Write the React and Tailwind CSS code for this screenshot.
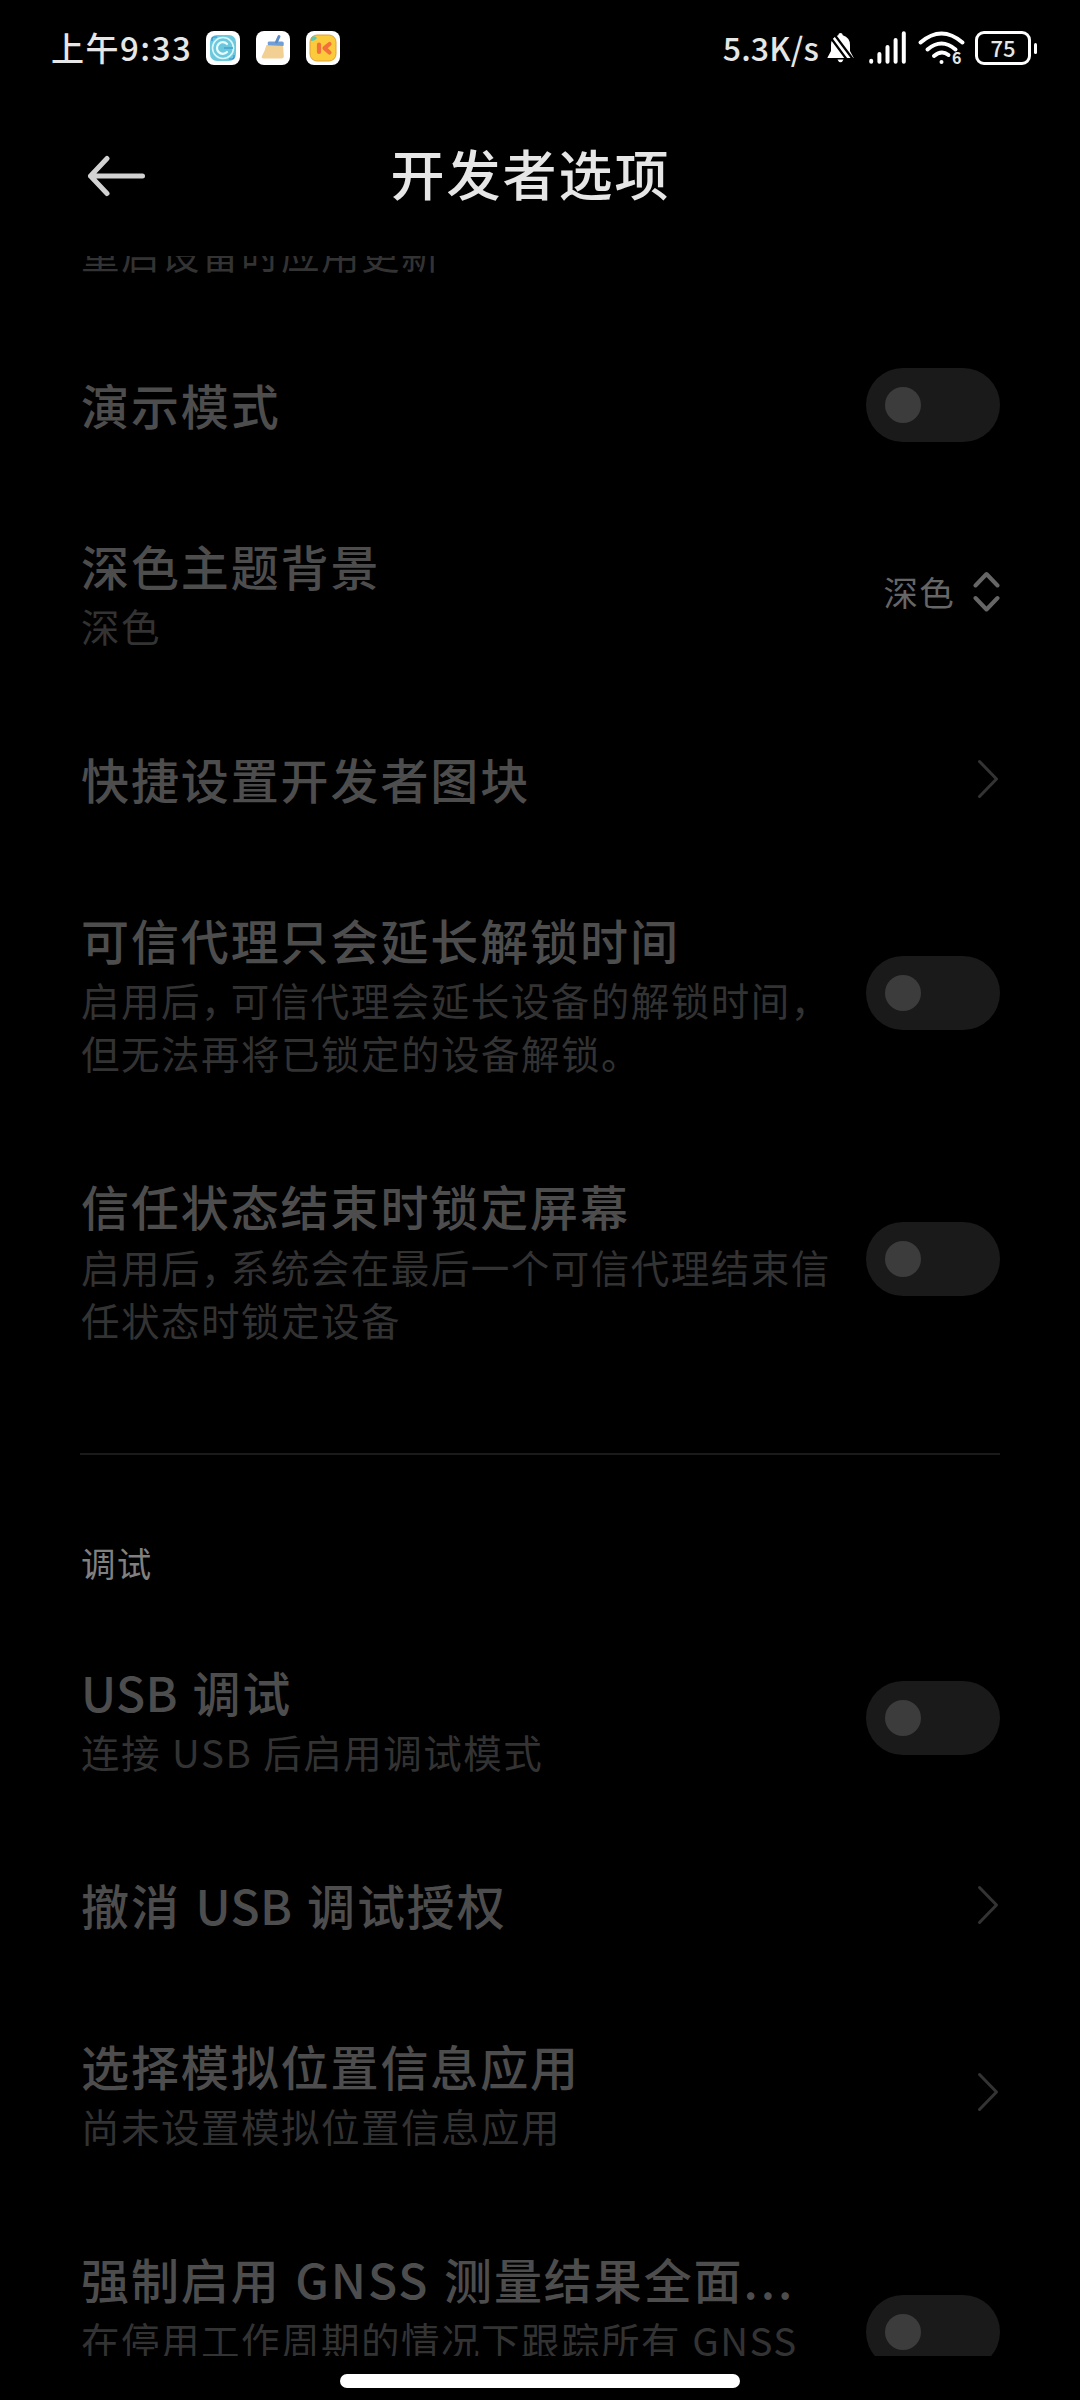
import React from 'react';

const Comma = () => <span className="mr-[9px] [font-feature-settings:'halt']">，</span>;

const Usb = () => <span className="tracking-[0.3px]">USB</span>;

const ITEMS_TOP = [
  { title: '演示模式', control: 'switch' },
  { title: '深色主题背景', lines: ['深色'], control: 'select', value: '深色' },
  { title: '快捷设置开发者图块', control: 'arrow' },
  {
    title: '可信代理只会延长解锁时间',
    lines: [<>启用后<Comma />可信代理会延长设备的解锁时间<Comma /></>, '但无法再将已锁定的设备解锁。'],
    control: 'switch',
  },
  {
    title: '信任状态结束时锁定屏幕',
    lines: [<>启用后<Comma />系统会在最后一个可信代理结束信</>, '任状态时锁定设备'],
    control: 'switch',
  },
];

const ITEMS_DEBUG = [
  { title: <><Usb /> 调试</>, lines: ['连接 USB 后启用调试模式'], control: 'switch' },
  { title: <>撤消 <Usb /> 调试授权</>, control: 'arrow' },
  { title: '选择模拟位置信息应用', lines: ['尚未设置模拟位置信息应用'], control: 'arrow' },
  {
    title: <>强制启用 GNSS 测量结果全面<span className="tracking-[3px]">...</span></>,
    lines: ['在停用工作周期的情况下跟踪所有 GNSS', ''],
    control: 'switch',
  },
];

const Switch = () => (
  <div className="-my-2 flex h-[74px] w-[134px] items-center rounded-full bg-[#1a1a1a] pl-[19px]">
    <div className="size-9 rounded-full bg-[#3c3c3c]" />
  </div>
);

const ArrowRight = () => (
  <svg className="mr-px h-[40px] w-[22px]" viewBox="0 0 22 40" fill="none" stroke="#333" strokeWidth="3" strokeLinecap="round" strokeLinejoin="round">
    <path d="M2.5 2.5 19.5 20 2.5 37.5" />
  </svg>
);

const Select = ({ value }) => (
  <div className="flex items-center">
    <span className="pb-[3px] text-[34.5px] leading-none tracking-[1.3px] text-[#666]">{value}</span>
    <svg className="ml-[18px] h-[42px] w-[27px]" viewBox="0 0 27 42" fill="none" stroke="#666" strokeWidth="4" strokeLinecap="round" strokeLinejoin="round">
      <path d="M2.5 14.5 13.5 3 24.5 14.5M2.5 27 13.5 38.5 24.5 27" />
    </svg>
  </div>
);

const Row = ({ title, lines, control, value }) => (
  <div className="flex items-center justify-between py-12">
    <div className="whitespace-nowrap pl-px">
      <div className="pb-0.5 text-[48px] font-medium leading-[62.5px] tracking-[1.9px] text-[#4d4d4d] [word-spacing:2px]">{title}</div>
      {lines?.map((line, i) => (
        <div key={i} className="h-[53px] pt-px text-[38.5px] leading-[53px] tracking-[1.5px] text-[#333] [word-spacing:1px]">{line}</div>
      ))}
    </div>
    {control === 'switch' && <Switch />}
    {control === 'arrow' && <ArrowRight />}
    {control === 'select' && <Select value={value} />}
  </div>
);

const StatusBar = () => (
  <div className="flex h-24 items-center justify-between pl-[51px] pr-[43px] text-[#e6e6e6]">
    <div className="flex items-center">
      <span className="w-[155px] whitespace-nowrap pb-[2px] text-[33px] font-medium leading-none tracking-[1.5px]">上午9:33</span>
      <div className="flex gap-4">
        <svg className="size-[34px]" viewBox="0 0 34 34" fill="none">
          <rect width="34" height="34" rx="8" fill="#fff" />
          <rect x="4" y="4" width="26" height="26" rx="7" fill="#6cc9dd" />
          <circle cx="17" cy="17" r="10.5" stroke="#d9f6fa" strokeWidth="1.6" />
          <path d="M21 13A5.8 5.8 0 1 0 21 21" stroke="#e8fbff" strokeWidth="2.2" strokeLinecap="round" />
          <path d="M18 17h9" stroke="#4aa3cf" strokeWidth="1.6" />
          <path d="M6 10V8q0-2 2-2h3M28 24v2q0 2-2 2h-3" stroke="#3a8fd0" strokeWidth="1.2" />
        </svg>
        <svg className="size-[34px]" viewBox="0 0 34 34" fill="none">
          <rect width="34" height="34" rx="8" fill="#fff" />
          <path d="M10.5 14H27l.8 11q.2 2.500-2.500 2.500H7.500q-2.500 0-1.500-2.500Q8.500 21 10.500 14Z" fill="#f2cf93" />
          <path d="M13 10.500h13q2 0 1.800 2l-.3 2.500-15.500-.8q-1-3.700 1-3.700Z" fill="#6f9fd6" />
          <path d="M20.500 11 23 5.500" stroke="#5a8cc8" strokeWidth="3" strokeLinecap="round" />
        </svg>
        <svg className="size-[34px]" viewBox="0 0 34 34" fill="none">
          <rect width="34" height="34" rx="8" fill="#fff" />
          <rect x="4" y="4" width="26" height="26" rx="7" fill="#fbcb3c" stroke="#e0a23a" />
          <path d="M13 13.500v7.500M23.500 13 18.500 17.200 23.500 21.500" stroke="#f3703a" strokeWidth="4.2" strokeLinecap="round" strokeLinejoin="round" />
          <path d="M5 6.500Q9 4 11 7 9 10 5 10Z" fill="#57c7c0" />
        </svg>
      </div>
    </div>

    <div className="flex items-center">
      <span className="mr-[8px] whitespace-nowrap pb-[3px] text-[32px] font-medium leading-none tracking-[0.2px]">5.3K/s</span>
      <svg className="mr-[15px] h-[30px] w-[27px]" viewBox="0 0 27 30">
        <path d="M13.5 0q2 0 2.300 2.200Q23 4.500 23 12v6l3.500 6.500v.5H.5v-.5L4 18v-6q0-7.500 7.200-9.800Q11.500 0 13.500 0ZM10.500 26.500h6q-1 2.700-3 2.700t-3-2.700Z" fill="#fff" />
        <path d="M2 2.500 22 29.500M7 1 26.500 27" stroke="#000" strokeWidth="2.2" />
      </svg>
      <svg className="mr-[12px] h-[34px] w-[37px]" viewBox="0 0 37 34" stroke="#fff" strokeWidth="4" strokeLinecap="round">
        <path d="M2.200 29.800v1M10.400 23v7.800M18.500 16v14.800M26.600 9v21.800M34.800 2.200v28.600" />
      </svg>
      <svg className="mr-[10px] h-[34px] w-[47px] overflow-visible" viewBox="0 0 47 34" fill="none" stroke="#fff" strokeWidth="4" strokeLinecap="round">
        <path d="M2.500 11.500Q23.500-6.500 44.500 11.500M9.500 18.500Q23.500 6.500 37.500 18.500M16 25Q23.500 18.500 30.500 24" />
        <circle cx="23.5" cy="31" r="2" fill="#fff" stroke="none" />
        <text x="34" y="33" fontSize="16" fontWeight="700" fill="#e6e6e6" stroke="none">6</text>
      </svg>
      <div className="flex h-[34px] w-[56px] items-center justify-center rounded-[9px] border-[3.5px] border-white pb-[2px] text-[22px] font-medium leading-none">75</div>
      <div className="ml-[3px] h-[11px] w-[3px] rounded-full bg-white" />
    </div>
  </div>
);

export default function App() {
  return (
    <div className="flex h-[2400px] w-[1080px] flex-col overflow-hidden bg-black font-['Noto_Sans_CJK_SC',sans-serif]">
      <StatusBar />

      <header className="grid h-40 grid-cols-[1fr_auto_1fr] items-center pl-[86px] pr-[105px]">
        <svg className="h-[42px] w-[60px]" viewBox="0 0 60 42" fill="none" stroke="#d2d2d2" strokeWidth="5" strokeLinecap="round" strokeLinejoin="round">
          <path d="M4.5 21h52M21 3.500 4.500 21 21 38.500" />
        </svg>
        <h1 className="pb-1.5 text-[54px] font-medium leading-none tracking-[2px] text-[#e6e6e6]">开发者选项</h1>
      </header>

      <main className="h-[2100px] overflow-hidden px-20">
        {/* tail of the row that is scrolled under the header */}
        <div className="flex h-[69px] flex-col justify-end pb-[46px] pl-px">
          <div className="text-[38.5px] leading-[53px] tracking-[1.5px] text-[#333]">重启设备时应用更新</div>
        </div>
        {ITEMS_TOP.map((item, i) => <Row key={i} {...item} />)}
        <div className="mt-[60px] h-0.5 bg-[#1a1a1a]" />
        <div className="flex h-[157px] items-center pl-px pt-[59px] text-[34.5px] leading-none tracking-[1.3px] text-[#808080]">调试</div>
        {ITEMS_DEBUG.map((item, i) => <Row key={i} {...item} />)}
      </main>

      <div className="mx-auto mt-[18px] h-[14px] w-[400px] rounded-full bg-white" />
    </div>
  );
}
